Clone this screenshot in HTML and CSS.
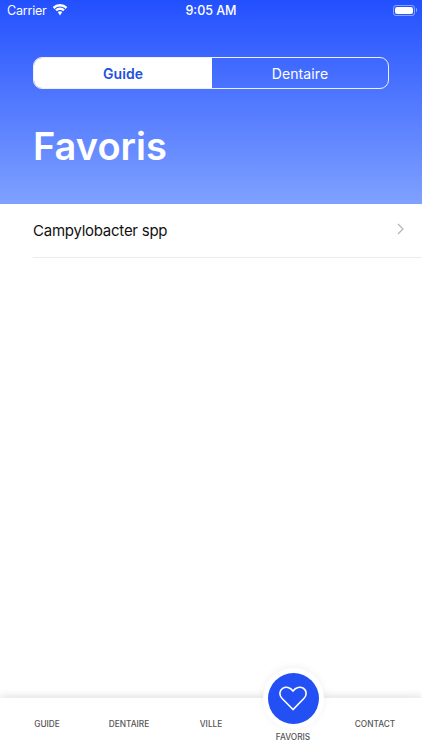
FILE: index.html
```html
<!DOCTYPE html>
<html lang="fr">

<head>
  <meta charset="UTF-8">
  <meta name="viewport" content="width=device-width, initial-scale=1.0">
  <title>Favoris</title>
  <link rel="stylesheet" href="styles.css">
</head>

<body>
  <main class="screen">
    <header class="hero">
      <div class="status">
        <div class="status-left">
          <span class="carrier">Carrier</span>
          <svg class="wifi" width="16" height="12" viewBox="0 0 16 12">
            <path d="M8 2.600c2.200 0 4.200.9 5.600 2.300l1.700-1.800A10.300 10.300 0 0 0 8 .1 10.300 10.300 0 0 0 .7 3.100l1.700 1.800A8 8 0 0 1 8 2.600z" />
            <path d="M8 6.100c1.200 0 2.300.5 3.100 1.200l1.700-1.800A7 7 0 0 0 8 3.600a7 7 0 0 0-4.800 1.900l1.700 1.800C5.700 6.600 6.800 6.100 8 6.100z" />
            <path d="M8 7.300c-.9 0-1.600.3-2.200.8L8 11.400l2.200-3.300c-.6-.5-1.300-.8-2.200-.8z" />
          </svg>
        </div>
        <span class="status-time">9:05 AM</span>
        <div class="status-right">
          <div class="battery"><div class="battery-level"></div></div>
          <div class="battery-cap"></div>
        </div>
      </div>

      <div class="segments">
        <button class="segment active">Guide</button>
        <button class="segment">Dentaire</button>
      </div>

      <h1 class="title">Favoris</h1>
    </header>

    <section class="list">
      <a class="row">
        <span>Campylobacter spp</span>
        <svg class="chevron" width="8" height="12" viewBox="0 0 8 12">
          <path d="M1 1l5 5-5 5" />
        </svg>
      </a>
    </section>

    <nav class="tabs">
      <a class="tab">GUIDE</a>
      <a class="tab">DENTAIRE</a>
      <a class="tab">VILLE</a>
      <a class="tab current">
        <span class="tab-fab">
          <svg width="28" height="25" viewBox="0 0 28 25">
            <path d="M14 23.500L2.900 12.300C-.2 9.200.5 4.300 3.600 2.300c3.200-2 7.600-1.200 10.400 2.700 2.800-3.900 7.200-4.700 10.400-2.700 3.100 2 3.800 6.900.7 10z" />
          </svg>
        </span>
        FAVORIS
      </a>
      <a class="tab">CONTACT</a>
    </nav>
  </main>
</body>

</html>
```

FILE: styles.css
```css
* {
  box-sizing: border-box;
}

body {
  margin: 0;
  background: #fff;
  font-family: Inter, "Liberation Sans", sans-serif;
}

.screen {
  display: flex;
  flex-direction: column;
  height: 750px;
  overflow: hidden;
}

.hero {
  background: linear-gradient(180deg, #2350ff 0%, #7fa1ff 100%);
  color: #fff;
  flex: none;
  height: 204px;
  padding: 0 33px;
}

.status {
  align-items: center;
  display: flex;
  font-size: 12.5px;
  height: 21px;
  justify-content: space-between;
  margin: 0 -33px;
  padding: 0 5px 0 7px;
  position: relative;
}

.status-left {
  align-items: center;
  display: flex;
  gap: 5px;
}

.carrier {
  letter-spacing: -0.2px;
}

.wifi {
  fill: #fff;
  margin-top: -2px;
}

.status-time {
  font-weight: 500;
  left: 0;
  position: absolute;
  right: 0;
  text-align: center;
}

.status-right {
  align-items: center;
  display: flex;
  gap: 1px;
  margin-top: -1px;
}

.battery {
  border: 1px solid rgba(255, 255, 255, 0.45);
  border-radius: 3px;
  height: 11px;
  padding: 1px;
  width: 22px;
}

.battery-level {
  background: #fff;
  border-radius: 2px;
  height: 100%;
}

.battery-cap {
  background: rgba(255, 255, 255, 0.45);
  border-radius: 0 1px 1px 0;
  height: 4px;
  width: 1px;
}

.segments {
  border: 1px solid rgba(255, 255, 255, 0.9);
  border-radius: 9px;
  display: flex;
  height: 32px;
  margin-top: 36px;
  overflow: hidden;
}

.segment {
  background: none;
  border: none;
  color: #fff;
  flex: 1;
  font-family: inherit;
  font-size: 14px;
  letter-spacing: 0.1px;
  padding: 0;
}

.segment.active {
  background: #fff;
  color: #2350e0;
  flex: 0 0 178px;
  font-weight: 600;
}

.title {
  font-size: 38px;
  font-weight: 600;
  line-height: 50px;
  margin: 32px 0 0;
}

.list {
  flex: 1;
  padding-left: 33px;
}

.row {
  align-items: center;
  border-bottom: 1px solid #ececec;
  color: #111;
  display: flex;
  font-size: 15px;
  height: 54px;
  justify-content: space-between;
  letter-spacing: -0.25px;
  padding-right: 17px;
}

.chevron {
  fill: none;
  margin-top: -3px;
  stroke: #b4b4b4;
  stroke-width: 1.2;
}

.tabs {
  background: #fff;
  box-shadow: 0 -2px 8px rgba(0, 0, 0, 0.12);
  display: flex;
  flex: none;
  height: 52px;
  padding: 0 6px;
}

.tab {
  color: #555;
  flex: 1;
  font-size: 8.3px;
  font-weight: 500;
  line-height: 52px;
  text-align: center;
}

.tab.current {
  line-height: 12px;
  margin-top: 33px;
  position: relative;
}

.tab-fab {
  align-items: center;
  background: #2350f5;
  border-radius: 50%;
  box-shadow: 0 0 0 5px #fff, 0 -1px 8px 5px rgba(0, 0, 0, 0.06);
  display: flex;
  height: 51px;
  justify-content: center;
  left: 50%;
  margin-left: -25.5px;
  position: absolute;
  top: -58px;
  width: 51px;
}

.tab-fab svg {
  fill: none;
  stroke: #fff;
  stroke-width: 1.6;
}
```
